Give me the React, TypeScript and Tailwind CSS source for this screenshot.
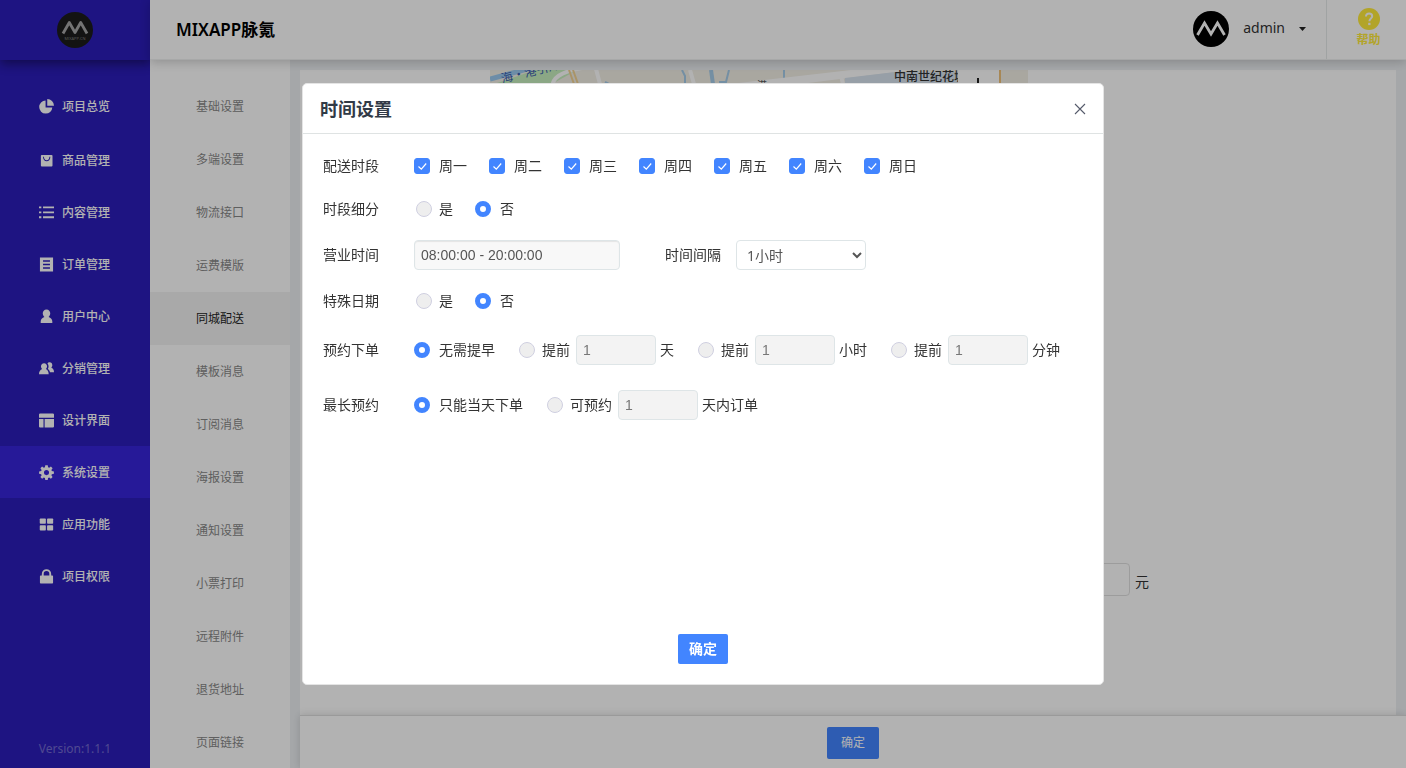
import { useState, type ReactNode } from 'react';

type IconName =
  | 'pie' | 'bag' | 'list' | 'order' | 'user' | 'users' | 'layout' | 'gear' | 'grid' | 'lock';

const icons: Record<IconName, ReactNode> = {
  pie: (
    <>
      <path d="M7 1.600V9h7.200A7 7 0 1 1 7 1.600z" />
      <path d="M8.800 0A7.200 7.200 0 0 1 16 7.200H8.800z" />
    </>
  ),
  bag: (
    <path
      fillRule="evenodd"
      d="M3 2h10.400a1 1 0 0 1 1 1v10.400a1 1 0 0 1-1 1H3a1 1 0 0 1-1-1V3a1 1 0 0 1 1-1zm1.300 2c0 2.700 1.500 4.800 3.900 4.800S12.100 6.700 12.100 4h-1c0 2.100-1 3.800-2.900 3.800S5.300 6.100 5.300 4z"
    />
  ),
  list: (
    <path d="M0 1.500h2.500v2H0zM4.300 1.500H16v2H4.300zM0 6.800h2.500v2H0zM4.300 6.800H16v2H4.300zM0 12h2.500v2H0zM4.300 12H16v2H4.300z" />
  ),
  order: (
    <path
      fillRule="evenodd"
      d="M1 .5h14v15H1zM4.300 3.500v1.500h7.400V3.500zM4.300 7.200v1.500h7.400V7.200zM4.300 10.900v1.500h7.400v-1.500z"
    />
  ),
  user: (
    <path d="M8 .4c2.500 0 4 1.900 4 4.200 0 1.600-.7 3-1.800 3.800 2.400.8 4 2.600 4 4.800v1.800H1.800v-1.800c0-2.200 1.600-4 4-4.800C4.700 7.600 4 6.200 4 4.600 4 2.300 5.500.4 8 .4z" />
  ),
  users: (
    <>
      <path d="M5.400 2.400c2 0 3.200 1.500 3.200 3.300 0 1.200-.5 2.200-1.300 2.800 2 .8 3 2.700 3 5.500H0c0-2.800 1.300-4.700 3.400-5.500-.8-.6-1.300-1.600-1.300-2.800 0-1.800 1.300-3.300 3.300-3.300z" />
      <path d="M11.300 1.400c1.800 0 2.900 1.300 2.900 3 0 1-.5 2-1.200 2.600 1.900.7 3 2.400 3 4.900h-4.300c-.4-1.500-1.200-2.600-2.300-3.300.5-.7.800-1.700.8-2.700 0-1.300-.4-2.400-1.200-3.200.6-.8 1.300-1.300 2.300-1.300z" />
    </>
  ),
  layout: <path d="M1.200.5h13.600A1.200 1.200 0 0 1 16 1.700v3.300H0V1.700A1.200 1.200 0 0 1 1.200.5zM0 6.300h4.800v9.200H1.200A1.200 1.200 0 0 1 0 14.300zM6 6.300h10v8a1.200 1.200 0 0 1-1.200 1.200H6z" />,
  gear: (
    <path
      fillRule="evenodd"
      d="M6.700.3h2.600l.4 2.200 1.200.5 1.800-1.300 1.800 1.800L13.200 5.300l.5 1.200 2.200.4v2.500l-2.200.4-.5 1.200 1.300 1.800-1.800 1.800-1.800-1.300-1.200.5-.4 2.200H6.700l-.4-2.200-1.200-.5-1.800 1.300-1.800-1.800L2.800 11l-.5-1.200L.1 9.400V6.900l2.200-.4.5-1.200L1.500 3.500l1.800-1.800L5.100 3l1.200-.5zM8 5.400a2.700 2.700 0 1 0 0 5.400 2.700 2.700 0 0 0 0-5.400z"
    />
  ),
  grid: (
    <>
      <rect x=".8" y="1.500" width="6.500" height="5.800" rx=".8" />
      <rect x="8.600" y="1.500" width="6.500" height="5.800" rx=".8" />
      <rect x=".8" y="8.700" width="6.500" height="5.800" rx=".8" />
      <rect x="8.600" y="8.700" width="6.500" height="5.800" rx=".8" />
    </>
  ),
  lock: (
    <path
      fillRule="evenodd"
      d="M3 6.800V5.200a5 5 0 0 1 10 0v1.600h1.200a.8.800 0 0 1 .8.800v7a.8.800 0 0 1-.8.800H1.800a.8.800 0 0 1-.8-.8v-7a.8.800 0 0 1 .8-.8zm2 0h6V5.200a3 3 0 0 0-6 0z"
    />
  ),
};

const menu: { label: string; icon: IconName; active?: boolean }[] = [
  { label: '项目总览', icon: 'pie' },
  { label: '商品管理', icon: 'bag' },
  { label: '内容管理', icon: 'list' },
  { label: '订单管理', icon: 'order' },
  { label: '用户中心', icon: 'user' },
  { label: '分销管理', icon: 'users' },
  { label: '设计界面', icon: 'layout' },
  { label: '系统设置', icon: 'gear', active: true },
  { label: '应用功能', icon: 'grid' },
  { label: '项目权限', icon: 'lock' },
];

const submenu = [
  '基础设置', '多端设置', '物流接口', '运费模版', '同城配送', '模板消息', '订阅消息',
  '海报设置', '通知设置', '小票打印', '远程附件', '退货地址', '页面链接',
];

const weekdays = ['周一', '周二', '周三', '周四', '周五', '周六', '周日'];

function Sidebar() {
  return (
    <aside className="flex w-[150px] shrink-0 flex-col bg-[#2b1dba] text-white">
      <div className="flex h-[60px] shrink-0 items-center justify-center shadow-[0_4px_10px_rgba(0,0,0,0.4)]">
        <svg className="size-9" viewBox="0 0 36 36">
          <circle cx="18" cy="18" r="18" fill="#1c1c1c" />
          <path d="M6 21.500 12.300 10.500 18 20.500 23.700 10.500 30 21.500" fill="none" stroke="#a6a6a6" strokeWidth="2.800" strokeLinejoin="round" />
          <text x="18" y="28" textAnchor="middle" fontSize="4" fill="#888" fontFamily="Open Sans, sans-serif">MIXAPP.CN</text>
        </svg>
      </div>
      <nav className="flex-1 pt-5">
        {menu.map((m) => (
          <a
            key={m.label}
            href="#"
            className={`flex h-[52px] items-center gap-2 pt-px pl-[39px] text-xs font-medium first:mb-0.5 ${m.active ? 'bg-[#3725da]' : ''}`}
          >
            <svg className="size-[15px]" viewBox="0 0 16 16" fill="currentColor">{icons[m.icon]}</svg>
            {m.label}
          </a>
        ))}
      </nav>
      <p className="pb-[11px] text-center text-xs text-white/35">Version:1.1.1</p>
    </aside>
  );
}

function Header() {
  return (
    <header className="z-10 flex h-[60px] shrink-0 items-center border-b border-[#f0f1f1] bg-white pl-[26px] shadow-[0_2px_10px_rgba(0,0,0,0.2)]">
      <h1 className="text-[17px] font-semibold text-black">MIXAPP脉氪</h1>
      <button type="button" className="ml-auto flex items-center gap-3.5 pr-5 pb-0.5 text-sm text-[#333]">
        <svg className="size-9" viewBox="0 0 36 36">
          <circle cx="18" cy="18" r="18" fill="#000" />
          <path d="M4.500 24 11.500 12 18 23 24.500 12 31.500 24" fill="none" stroke="#fff" strokeWidth="2.800" />
        </svg>
        <span className="pb-0.5">admin</span>
        <svg className="h-1 w-[7px]" viewBox="0 0 7 4"><path d="M0 0h7L3.500 4z" fill="#222" /></svg>
      </button>
      <a href="#" className="flex h-full w-20 flex-col items-center border-l border-[#e6eaea] pt-2 pl-1 text-xs leading-5 font-bold text-[#ffeb3b]">
        <svg className="size-[22px]" viewBox="0 0 22 22">
          <circle cx="11" cy="11" r="11" fill="currentColor" />
          <path d="M8 8.600c0-1.900 1.300-3.100 3.100-3.100 1.900 0 3.100 1.200 3.100 2.700 0 2.300-2.800 2.400-2.800 5" fill="none" stroke="#fff" strokeWidth="2" />
          <rect x="10.200" y="14.800" width="2.300" height="2.300" fill="#fff" />
        </svg>
        帮助
      </a>
    </header>
  );
}

function CityMap() {
  return (
    <svg className="h-[450px] w-[538px]" viewBox="0 0 538 450" fontFamily="'Noto Sans CJK SC', sans-serif">
      <rect width="538" height="450" fill="#f2efe6" />
      <path d="M4 14 25 7 45 0h42L62 14z" fill="#c7f0bf" />
      <path d="M0 9 45-3" stroke="#9dcbef" strokeWidth="5" />
      <path d="M92-2C70 2 62 8 62 18" fill="none" stroke="#fff" strokeWidth="4" />
      <path d="M79 0 84 14M83 0 88 14" stroke="#f4d494" strokeWidth="2" />
      <path d="M106-1 110 14M200 0 204 14M350 2 353 14" stroke="#fff" strokeWidth="4" />
      <path d="M192 0l3 6v8M115 12l4 2M294 0v9" stroke="#a6cdea" strokeWidth="2" fill="none" />
      <path d="M221 0l2 14" stroke="#a6cdea" strokeWidth="4" />
      <path d="M229 12h7l3-12" stroke="#a6cdea" strokeWidth="2" fill="none" />
      <path d="M240 14 370-1h60L310 14z" fill="#fff" />
      <path d="M355 14V8l50-6h63v12z" fill="#d8e4f0" />
      <g transform="rotate(-14 12 12)" fontSize="12" fill="#3b5cae">
        <text x="12" y="13">海·港引河</text>
      </g>
      <text x="267" y="19" fontSize="10" fill="#555">港</text>
      <text x="404" y="11" fontSize="12" fontWeight="500" fill="#333">中南世纪花城</text>
      <path d="M468 0h42v14h-42z" fill="#fff" />
      <path d="M510 0v14" stroke="#f0c27a" strokeWidth="2" />
      <path d="M488 8v8" stroke="#222" strokeWidth="2" />
    </svg>
  );
}

function Radio({ name, checked, onChange, children, className = '' }: {
  name: string; checked: boolean; onChange: () => void; children: ReactNode; className?: string;
}) {
  return (
    <label className={`flex items-center ${checked ? 'gap-[9px]' : 'gap-[7px]'} ${className}`}>
      <input
        type="radio"
        name={name}
        checked={checked}
        onChange={onChange}
        className="size-4 appearance-none rounded-full border border-[#cfcfe0] bg-[#eee] checked:border-5 checked:border-[#4285ff] checked:bg-white"
      />
      {children}
    </label>
  );
}

function Row({ label, className = '', children }: { label: string; className?: string; children: ReactNode }) {
  return (
    <div role="group" aria-label={label} className={`flex min-h-[30px] items-center ${className}`}>
      <span className="w-[91px] shrink-0">{label}</span>
      {children}
    </div>
  );
}

function Amount({ label }: { label: string }) {
  return (
    <input
      aria-label={label}
      disabled
      defaultValue="1"
      className="mr-1 ml-1.5 h-[30px] w-20 rounded-sm border border-[#dee5e7] bg-[#f3f3f3] px-1.5 font-['Liberation_Sans',sans-serif] text-sm text-[#777]"
    />
  );
}

function TimeDialog() {
  const [days, setDays] = useState<string[]>(weekdays);
  const [split, setSplit] = useState('否');
  const [special, setSpecial] = useState('否');
  const [advance, setAdvance] = useState('无需提早');
  const [longest, setLongest] = useState('只能当天下单');
  const toggle = (d: string) =>
    setDays((list) => (list.includes(d) ? list.filter((x) => x !== d) : [...list, d]));

  return (
    <div className="fixed inset-0 z-20 flex items-center justify-center bg-black/30">
      <section
        role="dialog"
        aria-labelledby="dialog-title"
        className="flex min-h-[602px] w-[802px] flex-col rounded-[5px] border border-[#e4e4e4] bg-white text-sm text-[#333]"
      >
        <header className="flex h-[50px] items-center justify-between border-b border-[#dfe3e3] px-[17px]">
          <h2 id="dialog-title" className="text-lg font-bold text-[#313a46]">时间设置</h2>
          <button type="button" aria-label="×" className="text-[#555b6b]">
            <svg className="size-3" viewBox="0 0 12 12"><path d="M1 1l10 10M11 1 1 11" stroke="currentColor" strokeWidth="1.100" /></svg>
          </button>
        </header>
        <form className="flex flex-1 flex-col px-5 pt-[17px] pb-5" onSubmit={(e) => e.preventDefault()}>
          <Row label="配送时段">
            <div className="flex gap-[22px]">
              {weekdays.map((d) => (
                <label key={d} className="flex items-center gap-[9px]">
                  <span className="grid size-4">
                    <input
                      type="checkbox"
                      checked={days.includes(d)}
                      onChange={() => toggle(d)}
                      className="peer col-start-1 row-start-1 size-4 appearance-none rounded-[3px] border border-[#d3d3e0] checked:border-[#4285ff] checked:bg-[#4285ff]"
                    />
                    <svg className="pointer-events-none col-start-1 row-start-1 hidden size-4 peer-checked:block" viewBox="0 0 16 16">
                      <path d="M4.500 8.500 7.300 11.200 12.200 5.500" fill="none" stroke="#fff" strokeWidth="1.200" />
                    </svg>
                  </span>
                  {d}
                </label>
              ))}
            </div>
          </Row>
          <Row label="时段细分" className="mt-[13px]">
            <Radio name="split" checked={split === '是'} onChange={() => setSplit('是')} className="ml-0.5">是</Radio>
            <Radio name="split" checked={split === '否'} onChange={() => setSplit('否')} className="ml-[22px]">否</Radio>
          </Row>
          <Row label="营业时间" className="mt-4">
            <input
              aria-label="营业时间"
              defaultValue="08:00:00 - 20:00:00"
              className="h-[30px] w-[206px] rounded-sm border border-[#dee5e7] bg-[#f8f8f8] px-1.5 font-['Liberation_Sans',sans-serif] text-sm text-[#555] shadow-[inset_0_1px_1px_rgba(0,0,0,0.08)]"
            />
            <label htmlFor="interval" className="ml-[45px]">时间间隔</label>
            <select id="interval" className="ml-[15px] h-[30px] w-[130px] rounded-sm border border-[#dee5e7] bg-white px-1.5 text-sm text-[#555]">
              <option>1小时</option>
            </select>
          </Row>
          <Row label="特殊日期" className="mt-4">
            <Radio name="special" checked={special === '是'} onChange={() => setSpecial('是')} className="ml-0.5">是</Radio>
            <Radio name="special" checked={special === '否'} onChange={() => setSpecial('否')} className="ml-[22px]">否</Radio>
          </Row>
          <Row label="预约下单" className="mt-[19px]">
            <Radio name="advance" checked={advance === '无需提早'} onChange={() => setAdvance('无需提早')}>无需提早</Radio>
            {['天', '小时', '分钟'].map((unit) => (
              <div key={unit} className="ml-6 flex items-center">
                <Radio name="advance" checked={advance === unit} onChange={() => setAdvance(unit)}>提前</Radio>
                <Amount label={unit} />
                {unit}
              </div>
            ))}
          </Row>
          <Row label="最长预约" className="mt-[25px]">
            <Radio name="longest" checked={longest === '只能当天下单'} onChange={() => setLongest('只能当天下单')}>只能当天下单</Radio>
            <div className="ml-6 flex items-center">
              <Radio name="longest" checked={longest === '可预约'} onChange={() => setLongest('可预约')}>可预约</Radio>
              <Amount label="天内订单" />
              天内订单
            </div>
          </Row>
          <button type="submit" className="mt-auto h-[30px] w-[50px] self-center rounded-xs bg-[#4285ff] font-bold text-white">
            确定
          </button>
        </form>
      </section>
    </div>
  );
}

export default function App() {
  return (
    <div className="flex h-screen overflow-hidden bg-[#edf0f3] font-['Noto_Sans','Noto_Sans_CJK_SC',sans-serif]">
      <Sidebar />
      <div className="flex min-w-0 flex-1 flex-col">
        <Header />
        <div className="flex min-h-0 flex-1">
          <nav className="w-[140px] shrink-0 overflow-hidden bg-white pt-5">
            {submenu.map((s) => (
              <a
                key={s}
                href="#"
                className={`flex h-[53px] items-center justify-center text-xs ${s === '同城配送' ? 'bg-[#f2f2f2] text-[#222]' : 'text-[#888]'}`}
              >
                {s}
              </a>
            ))}
          </nav>
          <div className="flex min-w-0 flex-1 flex-col pl-2.5">
            <main className="mt-2.5 mr-2.5 min-h-0 flex-1 overflow-hidden bg-white pl-[190px]">
              <CityMap />
              <div className="mt-[43px] flex items-center gap-[5px] text-sm text-[#333]">
                <input id="fee" className="h-[33px] w-[640px] rounded-sm border border-[#e0e0e0]" />
                <label htmlFor="fee" className="pt-1">元</label>
              </div>
            </main>
            <footer className="flex h-[53px] shrink-0 items-center justify-center border-t border-[#ddd] bg-white pt-0.5 shadow-[0_0_8px_rgba(0,0,0,0.15)]">
              <button type="button" className="h-8 w-[52px] rounded-xs bg-[#4285ff] text-xs text-white">确定</button>
            </footer>
          </div>
        </div>
      </div>
      <TimeDialog />
    </div>
  );
}
